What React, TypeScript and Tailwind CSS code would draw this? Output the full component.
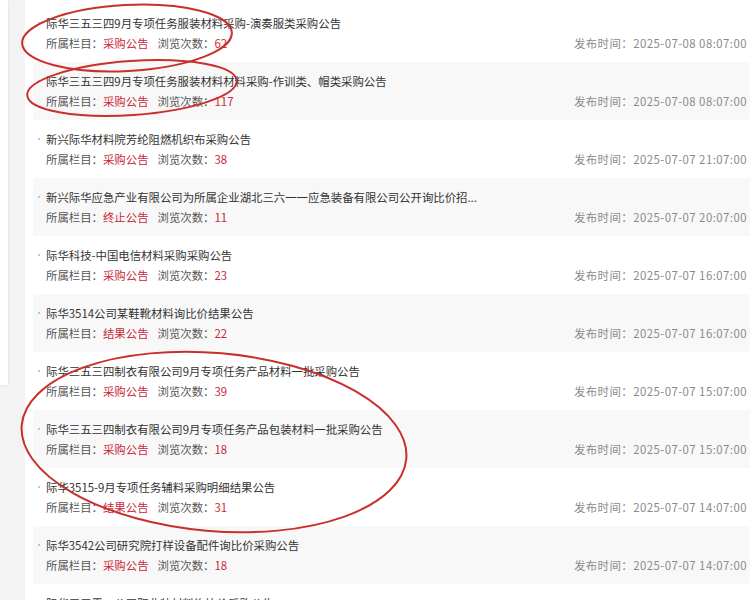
import React from 'react';

type Notice = {
  title: string;
  category: string;
  views: number;
  date: string;
};

const notices: Notice[] = [
  { title: '际华三五三四9月专项任务服装材料采购-演奏服类采购公告', category: '采购公告', views: 62, date: '2025-07-08 08:07:00' },
  { title: '际华三五三四9月专项任务服装材料材料采购-作训类、帽类采购公告', category: '采购公告', views: 117, date: '2025-07-08 08:07:00' },
  { title: '新兴际华材料院芳纶阻燃机织布采购公告', category: '采购公告', views: 38, date: '2025-07-07 21:07:00' },
  { title: '新兴际华应急产业有限公司为所属企业湖北三六一一应急装备有限公司公开询比价招...', category: '终止公告', views: 11, date: '2025-07-07 20:07:00' },
  { title: '际华科技-中国电信材料采购采购公告', category: '采购公告', views: 23, date: '2025-07-07 16:07:00' },
  { title: '际华3514公司某鞋靴材料询比价结果公告', category: '结果公告', views: 22, date: '2025-07-07 16:07:00' },
  { title: '际华三五三四制衣有限公司9月专项任务产品材料一批采购公告', category: '采购公告', views: 39, date: '2025-07-07 15:07:00' },
  { title: '际华三五三四制衣有限公司9月专项任务产品包装材料一批采购公告', category: '采购公告', views: 18, date: '2025-07-07 15:07:00' },
  { title: '际华3515-9月专项任务辅料采购明细结果公告', category: '结果公告', views: 31, date: '2025-07-07 14:07:00' },
  { title: '际华3542公司研究院打样设备配件询比价采购公告', category: '采购公告', views: 18, date: '2025-07-07 14:07:00' },
  { title: '际华三五零二公司职业装材料询比价采购公告', category: '采购公告', views: 27, date: '2025-07-07 11:07:00' },
];

const NoticeRow: React.FC<{ item: Notice; shaded: boolean }> = ({ item, shaded }) => (
  <div className={`h-[58px] shrink-0 pl-[5px] pr-[3px] pt-[9px] ${shaded ? 'bg-[#f8f8f8]' : 'bg-white'}`}>
    <div className="flex h-5 items-center leading-5">
      <span className="flex w-[8px] shrink-0 items-center">
        <span className="h-[2px] w-[2px] rounded-full bg-[#b5b5b5]" />
      </span>
      <span className="whitespace-nowrap text-[#333]">{item.title}</span>
    </div>
    <div className="flex h-5 items-center justify-between pl-[8px] leading-5">
      <div className="whitespace-nowrap">
        <span className="text-[#555]">所属栏目：</span>
        <span className="text-[#c8283c]">{item.category}</span>
        <span className="ml-[9px] text-[#555]">浏览次数：</span>
        <span className="text-[#c8283c]">{item.views}</span>
      </div>
      <div className="whitespace-nowrap tracking-[0.45px] text-[#8a8a8a]">发布时间：{item.date}</div>
    </div>
  </div>
);

export default function App() {
  return (
    <div
      className="relative flex h-[600px] w-[750px] overflow-hidden bg-[#f3f3f3] text-[11.4px]"
      style={{ fontFamily: '"Noto Sans CJK SC", "Noto Sans", sans-serif' }}
    >
      {/* sidebar edge */}
      <div className="h-[385px] w-[8px] shrink-0 bg-white shadow-[1px_1px_2px_rgba(0,0,0,0.05)]" />

      {/* main list panel */}
      <div className="ml-[17px] flex flex-1 flex-col bg-white pl-[8px] pt-[4px]">
        {notices.map((item, i) => (
          <NoticeRow key={i} item={item} shaded={i % 2 === 1} />
        ))}
      </div>

      {/* red hand-drawn annotations */}
      <svg className="pointer-events-none absolute left-0 top-0" width="750" height="600" viewBox="0 0 750 600">
        <g fill="none" stroke="#c9302c" strokeWidth="2">
          <ellipse cx="127" cy="38" rx="105" ry="33" transform="rotate(-3 127 38)" />
          <ellipse cx="132" cy="88" rx="105" ry="27" transform="rotate(-4 132 88)" />
          <ellipse cx="214" cy="442" rx="193" ry="89" transform="rotate(5 214 442)" />
        </g>
      </svg>
    </div>
  );
}
